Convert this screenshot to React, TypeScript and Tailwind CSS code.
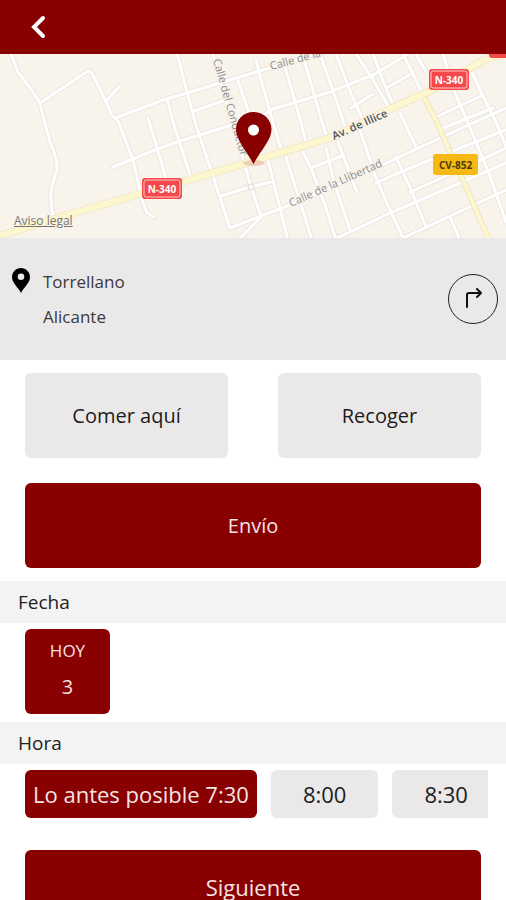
import React, { useState } from 'react';

const streets = [
  'M11 54 L18 72 L31 89 L40 103 L44 120 L50 142 Q58 160 57 170 Q50 188 51 200 L53 220',
  'M40 103 L85 73 Q90 69 93 75 L106 102 L112 115 L118 121 L133 160 L142 200 L147 213 L154 217',
  'M106 101 L120 86',
  'M115 118 L166 99 L187 93 L253 73 L330 50',
  'M177 54 L187 92 L195 122 L213 176 L230 228 L258 217 L285 207 L378 167 L440 138 L506 108',
  'M148 118 L166 178',
  'M167 99 L173 122 L190 175',
  'M113 167 L155 150 L180 141 L232 125',
  'M194 111 L232 98',
  'M213 54 L229 112 L244 162 L251 187 L261 216',
  'M238 81 L250 116 L262 158',
  'M221 196 L250 187 L271 182',
  'M238 240 L260 218',
  'M256 60 L260 76 L274 126 L282 152',
  'M283 60 L301 122 L307 147',
  'M303 56 L322 122 L328 140',
  'M320 54 L338 105 L346 130',
  'M336 54 L352 96 L364 122',
  'M356 54 L372 78 L388 106',
  'M373 54 L385 86 L392 102',
  'M400 113 L416 147',
  'M268 160 L288 240',
  'M286 157 L312 240',
  'M303 152 L311 168 L325 205 L336 240',
  'M311 168 L344 155',
  'M326 148 L334 182 L350 230',
  'M338 142 L357 192',
  'M360 130 L376 178 L390 210 L404 240',
  'M396 157 L412 192 L426 227',
  'M262 116 L273 109 L330 92 L375 74 L408 54',
  'M351 108 L373 94',
  'M386 88 L413 73',
  'M403 54 L413 74 L424 97',
  'M416 54 L426 72',
  'M443 54 L453 88 L476 142 L490 176 L506 222',
  'M470 68 L482 94 L496 122 L506 146',
  'M436 117 L483 95',
  'M443 128 L493 108',
  'M376 183 L396 174 L435 158 L506 130',
  'M410 192 L455 172 L506 148',
  'M333 240 L390 213 L460 183 L506 163',
  'M403 238 L480 202 L506 190',
  'M450 217 L460 240',
];

const avenue = 'M-4 237 L60 217 L140 194 L182 182 L253 161 L333 137 L390 109 L428 92 L486 59 L510 52';
const sideRoad = 'M424 97 L436 120 L450 152 L463 180 L489 240';

interface ShieldProps {
  x: number;
  y: number;
  width: number;
  label: string;
  yellow?: boolean;
}

const Shield: React.FC<ShieldProps> = ({ x, y, width, label, yellow }) => (
  <g>
    <rect x={x} y={y} width={width} height="21" rx="3" fill={yellow ? '#f5b912' : '#f5484b'} />
    {!yellow && (
      <rect x={x + 2} y={y + 2} width={width - 4} height="17" rx="2" fill="none" stroke="#ffc9c9" />
    )}
    <text
      x={x + width / 2}
      y={y + 15}
      textAnchor="middle"
      fontSize="10"
      fontWeight="700"
      fill={yellow ? '#4a3b0c' : '#fff'}
    >
      {label}
    </text>
  </g>
);

const StreetMap: React.FC = () => (
  <div className="relative">
    <svg
      viewBox="0 54 506 184"
      className="block w-full bg-[#f8f4ec] font-['Open_Sans',sans-serif]"
      role="img"
      aria-label="Mapa de Torrellano"
    >
      <g fill="none" strokeLinejoin="round" strokeLinecap="round">
        {streets.map((d) => (
          <path key={d} d={d} stroke="#ebe7e1" strokeWidth="5" />
        ))}
        {streets.map((d) => (
          <path key={d} d={d} stroke="#fff" strokeWidth="3" />
        ))}
        <path d={sideRoad} stroke="#efe6c4" strokeWidth="6" />
        <path d={sideRoad} stroke="#fdf6cf" strokeWidth="4" />
        <path d={avenue} stroke="#f3e7c8" strokeWidth="8" />
        <path d={avenue} stroke="#fdf7cf" strokeWidth="6" />
      </g>
      <circle cx="251" cy="187" r="3" fill="#fff" stroke="#ddd8d0" />

      <g fill="#8f8d8b" stroke="#f8f4ec" strokeWidth="2" paintOrder="stroke" fontSize="11">
        <text transform="translate(213 60) rotate(74)">Calle del Conductor</text>
        <text transform="translate(271 70) rotate(-15)">Calle de la</text>
        <text transform="translate(291 207) rotate(-24)">Calle de la Llibertad</text>
        <text transform="translate(334 140) rotate(-24)" fill="#555" fontSize="11" fontWeight="600">
          Av. de Illice
        </text>
      </g>

      <Shield x={142} y={178} width={40} label="N-340" />
      <Shield x={429} y={69} width={40} label="N-340" />
      <Shield x={433} y={154} width={45} label="CV-852" yellow />
      <rect x="489" y="46" width="40" height="12" rx="3" fill="#f5484b" />

      <ellipse cx="254" cy="163" rx="11" ry="3" fill="#e3a996" opacity="0.5" />
      <path
        fill="#880000"
        d="M253.5 112 C243 112 236 120 236 129.5 C236 140 246 150 253.5 164 C261 150 271.500 140 271.5 129.5 C271.5 120 264 112 253.5 112 Z"
      />
      <circle cx="253.5" cy="130" r="5.5" fill="#fff" />
    </svg>
    <a href="#aviso-legal" className="absolute bottom-2 left-3.5 text-[12px] leading-[18px] text-[#77736e] underline">
      Aviso legal
    </a>
  </div>
);

const SectionTitle: React.FC<{ children: React.ReactNode }> = ({ children }) => (
  <h2 className="bg-[#f3f3f3] px-[18px] text-[19px] leading-[42px] text-[#222]">{children}</h2>
);

const modes = ['Comer aquí', 'Recoger', 'Envío'];
const hours = ['Lo antes posible 7:30', '8:00', '8:30'];

const App: React.FC = () => {
  const [mode, setMode] = useState('Envío');
  const [hour, setHour] = useState(hours[0]);

  return (
    <div className="min-h-screen overflow-hidden bg-white font-['Open_Sans',sans-serif] text-[#1c1c1c]">
      <header className="flex h-[54px] items-center bg-[#880000] px-6">
        <button type="button" aria-label="Volver" className="flex size-7 items-center justify-center">
          <svg width="28" height="28" viewBox="0 0 28 28" fill="none" stroke="#fff" strokeWidth="4" strokeLinecap="round">
            <path d="M19 5 L10 14 L19 23" />
          </svg>
        </button>
      </header>

      <StreetMap />

      <section className="flex items-center justify-between bg-[#eae8e9] py-[26px] pr-2 pl-3">
        <div className="flex items-start gap-[13px]">
          <svg width="18" height="25" viewBox="0 0 18 25" className="mt-1">
            <path
              fillRule="evenodd"
              d="M9 0 C4 0 0 4 0 9 C0 15 6 19 9 25 C12 19 18 15 18 9 C18 4 14 0 9 0 Z M9 5.5 A3.3 3.3 0 1 1 9 12.1 A3.3 3.3 0 1 1 9 5.5 Z"
            />
          </svg>
          <address className="text-[17px] leading-[35px] text-[#3a3a3a] not-italic">
            Torrellano
            <br />
            Alicante
          </address>
        </div>
        <button
          type="button"
          aria-label="Cómo llegar"
          className="flex size-[50px] items-center justify-center rounded-full border border-[#222]"
        >
          <svg width="20" height="22" viewBox="0 0 20 22" fill="none" stroke="#111" strokeWidth="2" strokeLinecap="round" strokeLinejoin="round">
            <path d="M4 19 V7 Q4 5 6 5 H18 M14 1 L18 5 L14 9" />
          </svg>
        </button>
      </section>

      <div className="grid grid-cols-2 gap-x-[50px] gap-y-[25px] px-[25px] py-[13px]">
        {modes.map((name) => (
          <button
            key={name}
            type="button"
            aria-pressed={mode === name}
            onClick={() => setMode(name)}
            className={`h-[85px] rounded-md text-[20px] last:col-span-2 ${
              mode === name ? 'bg-[#880000] text-[#f5e4e4]' : 'bg-[#eae8e9]'
            }`}
          >
            {name}
          </button>
        ))}
      </div>

      <SectionTitle>Fecha</SectionTitle>
      <div className="px-[25px] pt-1.5 pb-2">
        <button
          type="button"
          className="flex size-[85px] flex-col items-center rounded-md bg-[#880000] pt-1 leading-[36px] text-[#f5e4e4]"
        >
          <span className="text-[17px]">HOY</span>
          <span className="text-[20px]">3</span>
        </button>
      </div>

      <SectionTitle>Hora</SectionTitle>
      <div className="mr-[18px] flex gap-3.5 overflow-hidden pt-1.5 pl-[25px]">
        {hours.map((time) => (
          <button
            key={time}
            type="button"
            aria-pressed={hour === time}
            onClick={() => setHour(time)}
            className={`h-12 shrink-0 rounded-md text-[22px] ${
              hour === time ? 'bg-[#880000] px-2 text-[#f5e4e4]' : 'bg-[#eae8e9] px-8'
            }`}
          >
            {time}
          </button>
        ))}
      </div>

      <div className="px-[25px] pt-8">
        <button type="button" className="h-[74px] w-full rounded-md bg-[#880000] text-[22px] text-[#f5e4e4]">
          Siguiente
        </button>
      </div>
    </div>
  );
};

export default App;
